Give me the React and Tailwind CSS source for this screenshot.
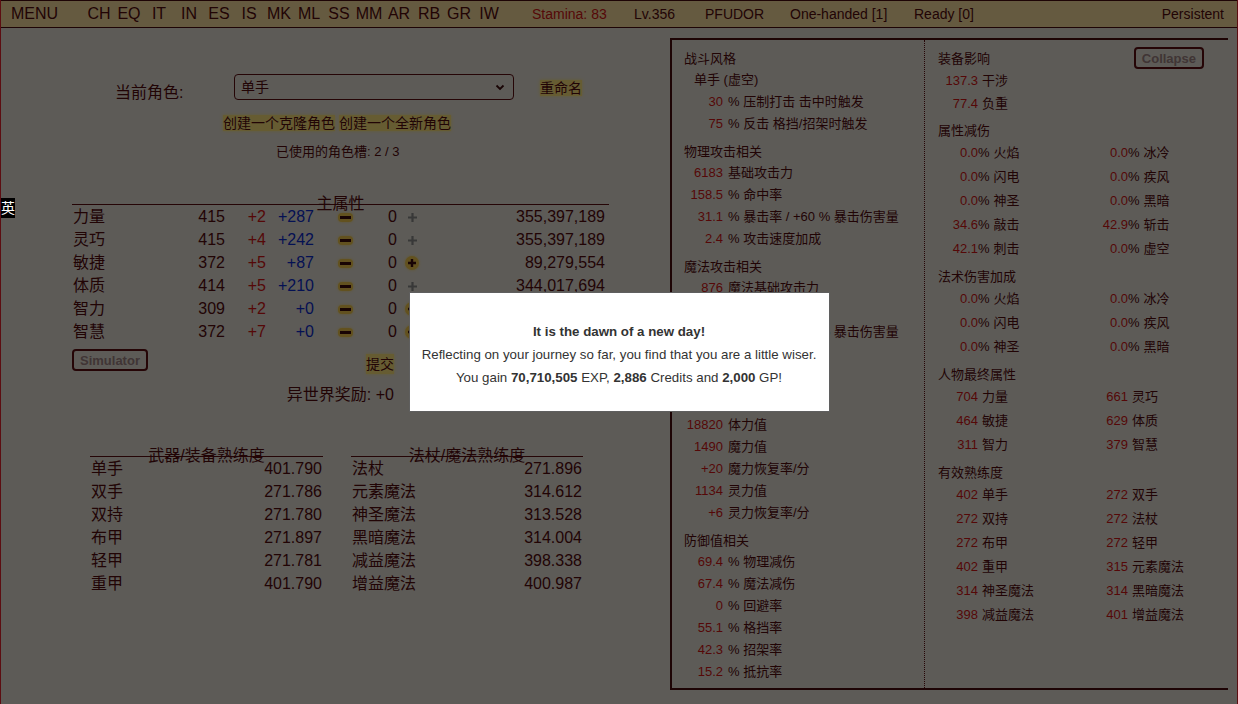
import React from "react";

const menuCodes = ["CH", "EQ", "IT", "IN", "ES", "IS", "MK", "ML", "SS", "MM", "AR", "RB", "GR", "IW"];

const primary = [
  { name: "力量", base: 415, bonus: "+2", extra: "+287", plus: "off", exp: "355,397,189" },
  { name: "灵巧", base: 415, bonus: "+4", extra: "+242", plus: "off", exp: "355,397,189" },
  { name: "敏捷", base: 372, bonus: "+5", extra: "+87", plus: "on", exp: "89,279,554" },
  { name: "体质", base: 414, bonus: "+5", extra: "+210", plus: "off", exp: "344,017,694" },
  { name: "智力", base: 309, bonus: "+2", extra: "+0", plus: "on", exp: "104,573,422" },
  { name: "智慧", base: 372, bonus: "+7", extra: "+0", plus: "on", exp: "89,279,554" },
];

const weaponProf = [
  ["单手", "401.790"], ["双手", "271.786"], ["双持", "271.780"],
  ["布甲", "271.897"], ["轻甲", "271.781"], ["重甲", "401.790"],
];
const magicProf = [
  ["法杖", "271.896"], ["元素魔法", "314.612"], ["神圣魔法", "313.528"],
  ["黑暗魔法", "314.004"], ["减益魔法", "398.338"], ["增益魔法", "400.987"],
];

const leftStats = [
  {
    title: "战斗风格",
    note: "单手 (虚空)",
    rows: [["30", "% 压制打击 击中时触发"], ["75", "% 反击 格挡/招架时触发"]],
  },
  {
    title: "物理攻击相关",
    rows: [["6183", "基础攻击力"], ["158.5", "% 命中率"], ["31.1", "% 暴击率 / +60 % 暴击伤害量"], ["2.4", "% 攻击速度加成"]],
  },
  {
    title: "魔法攻击相关",
    rows: [["876", "魔法基础攻击力"], ["102.3", "% 命中率"], ["24.6", "% 暴击率 / +60 % 暴击伤害量"], ["12.5", "% 施法速度加成"], ["15.0", "% 魔力消耗减免"]],
  },
  {
    title: "体力值相关",
    rows: [["18820", "体力值"], ["1490", "魔力值"], ["+20", "魔力恢复率/分"], ["1134", "灵力值"], ["+6", "灵力恢复率/分"]],
  },
  {
    title: "防御值相关",
    rows: [["69.4", "% 物理减伤"], ["67.4", "% 魔法减伤"], ["0", "% 回避率"], ["55.1", "% 格挡率"], ["42.3", "% 招架率"], ["15.2", "% 抵抗率"]],
  },
];

const resist = [
  [["0.0", "火焰"], ["0.0", "冰冷"]],
  [["0.0", "闪电"], ["0.0", "疾风"]],
  [["0.0", "神圣"], ["0.0", "黑暗"]],
  [["34.6", "敲击"], ["42.9", "斩击"]],
  [["42.1", "刺击"], ["0.0", "虚空"]],
];
const spellDmg = [
  [["0.0", "火焰"], ["0.0", "冰冷"]],
  [["0.0", "闪电"], ["0.0", "疾风"]],
  [["0.0", "神圣"], ["0.0", "黑暗"]],
];
const finalStats = [
  [["704", "力量"], ["661", "灵巧"]],
  [["464", "敏捷"], ["629", "体质"]],
  [["311", "智力"], ["379", "智慧"]],
];
const effProf = [
  [["402", "单手"], ["272", "双手"]],
  [["272", "双持"], ["272", "法杖"]],
  [["272", "布甲"], ["272", "轻甲"]],
  [["402", "重甲"], ["315", "元素魔法"]],
  [["314", "神圣魔法"], ["314", "黑暗魔法"]],
  [["398", "减益魔法"], ["401", "增益魔法"]],
];

function MinusBtn() {
  return (
    <span className="inline-flex items-center justify-center w-[15px] h-[9px] rounded-[4px] bg-[#f4cb4e] shadow-[0_0_3px_#f6d770]">
      <span className="w-[11px] h-[3px] bg-[#3d0a0c]" />
    </span>
  );
}

function PlusBtn({ on }) {
  if (on) {
    return (
      <span className="inline-flex items-center justify-center w-[14px] h-[14px] rounded-full bg-[#f4cb4e] shadow-[0_0_3px_#f6d770]">
        <svg width="10" height="10" viewBox="0 0 10 10">
          <path d="M5 1v8M1 5h8" stroke="#3d0a0c" strokeWidth="2.4" />
        </svg>
      </span>
    );
  }
  return (
    <svg width="11" height="11" viewBox="0 0 11 11">
      <path d="M5.5 1v9M1 5.5h9" stroke="#8c8c8c" strokeWidth="2.2" />
    </svg>
  );
}

function ProfTable({ title, rows, width }) {
  return (
    <div className={width}>
      <div className="h-[11px] leading-[20px] text-center text-[16px] border-b border-[#5C0D11]">{title}</div>
      {rows.map(([label, val]) => (
        <div key={label} className="h-[23px] flex items-center justify-between text-[16px] px-[1px]">
          <span>{label}</span>
          <span>{val}</span>
        </div>
      ))}
    </div>
  );
}

function PairGrid({ rows, pct }) {
  return (
    <div>
      {rows.map((pair, i) => (
        <div key={i} className="h-[24px] grid grid-cols-[150px_150px] items-center">
          {pair.map(([num, label]) => (
            <div key={label} className="flex items-center">
              <span className="w-[53px] text-right text-[#d41414]">{num}</span>
              {pct && <span>%</span>}
              <span className="ml-[4px]">{label}</span>
            </div>
          ))}
        </div>
      ))}
    </div>
  );
}

export default function App() {
  return (
    <div className="relative w-full h-[704px] overflow-hidden bg-[#E9E4D9] text-[#540a0e] border-x border-[#5C0D11] font-['Liberation_Sans','Noto_Sans_CJK_SC',sans-serif]">
      {/* Top menu bar */}
      <div className="h-[28px] flex items-center bg-[#FDE0A0] border-y border-[#4a0a0d] text-[16px] pl-[10px] pr-[13px]">
        <div className="w-[73px]">MENU</div>
        {menuCodes.map((c) => (
          <div key={c} className="w-[30px] text-center">{c}</div>
        ))}
        <div className="ml-[28px] w-[102px] text-[14px] text-[#d41414]">Stamina: 83</div>
        <div className="w-[71px] text-[14px]">Lv.356</div>
        <div className="w-[85px] text-[14px]">PFUDOR</div>
        <div className="w-[124px] text-[14px]">One-handed [1]</div>
        <div className="flex-1 text-[14px]">Ready [0]</div>
        <div className="text-[14px]">Persistent</div>
      </div>

      <div className="flex">
        {/* Character column */}
        <div className="w-[669px] shrink-0">
          <div className="mt-[46px] flex items-start">
            <div className="ml-[114px] w-[119px] mt-[7px] text-[16px] leading-[24px]">当前角色:</div>
            <div className="w-[280px] h-[26px] border border-[#5C0D11] rounded-[4px] flex items-center justify-between pl-[6px] pr-[8px] text-[14px]">
              <span>单手</span>
              <svg width="10" height="7" viewBox="0 0 10 7">
                <path d="M1.5 1.5L5 5l3.5-3.5" fill="none" stroke="#3d0a0c" strokeWidth="1.8" />
              </svg>
            </div>
            <div className="ml-[26px] mt-[4px] text-[14px] leading-[20px]">
              <span className="bg-[#FFE67E] shadow-[0_0_3px_#FFE67E]">重命名</span>
            </div>
          </div>

          <div className="mt-[8px] ml-[222px] text-[14px] leading-[20px]">
            <span className="bg-[#FFE67E] shadow-[0_0_3px_#FFE67E]">创建一个克隆角色</span>{" "}
            <span className="bg-[#FFE67E] shadow-[0_0_3px_#FFE67E]">创建一个全新角色</span>
          </div>

          <div className="mt-[10px] ml-[275px] text-[13px] leading-[18px]">已使用的角色槽: 2 / 3</div>

          {/* Primary attributes */}
          <div className="mt-[33px] ml-[71px] w-[537px]">
            <div className="h-[11px] leading-[20px] text-center text-[16px] border-b border-[#5C0D11]">主属性</div>
            {primary.map((p) => (
              <div key={p.name} className="h-[23px] grid grid-cols-[108px_45px_41px_48px_17px_28px_38px_30px_178px] items-center text-[16px]">
                <span className="pl-[1px]">{p.name}</span>
                <span className="text-right">{p.base}</span>
                <span className="text-right text-[#d41414]">{p.bonus}</span>
                <span className="text-right text-[#0c2ccf]">{p.extra}</span>
                <span />
                <span className="flex justify-center"><MinusBtn /></span>
                <span className="text-right">0</span>
                <span className="flex justify-center"><PlusBtn on={p.plus === "on"} /></span>
                <span className="text-right">{p.exp}</span>
              </div>
            ))}
          </div>

          <div className="mt-[6px] ml-[71px] w-[322px] flex justify-between items-start">
            <button className="h-[22px] px-[6px] border-2 border-[#5C0D11] rounded-[4px] text-[13px] font-bold text-[#a08585] leading-none">
              Simulator
            </button>
            <span className="mt-[5px] text-[14px] leading-[20px] bg-[#FFE67E] shadow-[0_0_3px_#FFE67E]">提交</span>
          </div>
          <div className="ml-[71px] w-[322px] mt-[10px] text-right text-[16px] leading-[22px]">异世界奖励: +0</div>

          {/* Proficiencies */}
          <div className="mt-[40px] ml-[89px] flex gap-[28px]">
            <ProfTable title="武器/装备熟练度" rows={weaponProf} width="w-[233px]" />
            <ProfTable title="法杖/魔法熟练度" rows={magicProf} width="w-[232px]" />
          </div>
        </div>

        {/* Stats panel */}
        <div className="mt-[10px] w-[558px] h-[652px] border-t-2 border-l-2 border-b-2 border-[#4a0a0d] flex text-[13px]">
          <div className="w-[253px] border-r border-dotted border-[#5C0D11] pt-[8px]">
            {leftStats.map((sec, si) => (
              <div key={sec.title} className={si > 0 ? "mt-[6px]" : ""}>
                <div className="h-[21px] leading-[21px] pl-[12px]">{sec.title}</div>
                {sec.note && <div className="h-[22px] leading-[22px] pl-[22px]">{sec.note}</div>}
                {sec.rows.map(([num, label]) => (
                  <div key={label + num} className="h-[22px] flex items-center">
                    <span className="w-[51px] text-right text-[#d41414]">{num}</span>
                    <span className="ml-[5px]">{label}</span>
                  </div>
                ))}
              </div>
            ))}
          </div>

          <div className="flex-1 pt-[8px]">
            <div className="h-[21px] flex items-start justify-between pl-[13px] pr-[24px]">
              <span className="leading-[21px]">装备影响</span>
              <button className="-mt-[1px] h-[22px] px-[6px] border-2 border-[#5C0D11] rounded-[4px] text-[13px] font-bold text-[#a08585] leading-none">
                Collapse
              </button>
            </div>
            {[["137.3", "干涉"], ["77.4", "负重"]].map(([num, label]) => (
              <div key={label} className="h-[23px] flex items-center">
                <span className="w-[53px] text-right text-[#d41414]">{num}</span>
                <span className="ml-[4px]">{label}</span>
              </div>
            ))}

            <div className="mt-[5px] h-[21px] leading-[21px] pl-[13px]">属性减伤</div>
            <PairGrid rows={resist} pct />

            <div className="mt-[5px] h-[21px] leading-[21px] pl-[13px]">法术伤害加成</div>
            <PairGrid rows={spellDmg} pct />

            <div className="mt-[5px] h-[21px] leading-[21px] pl-[13px]">人物最终属性</div>
            <PairGrid rows={finalStats} />

            <div className="mt-[5px] h-[21px] leading-[21px] pl-[13px]">有效熟练度</div>
            <PairGrid rows={effProf} />
          </div>
        </div>
      </div>

      {/* Dim overlay + daily popup */}
      <div className="absolute inset-0 bg-black/60 z-10" />
      <div className="absolute left-0 top-[198px] z-30 w-[14px] h-[20px] bg-black text-white text-[14px] leading-[20px] text-center overflow-hidden">英</div>
      <div className="absolute inset-0 z-20 flex items-center justify-center">
        <div className="w-[421px] h-[120px] bg-white border border-[#5f5f5f] pt-[27px] text-center text-[13.3px] leading-[23px] text-[#333] font-['Liberation_Sans',sans-serif]">
          <div className="font-bold">It is the dawn of a new day!</div>
          <div>Reflecting on your journey so far, you find that you are a little wiser.</div>
          <div>
            You gain <b>70,710,505</b> EXP, <b>2,886</b> Credits and <b>2,000</b> GP!
          </div>
        </div>
      </div>
    </div>
  );
}
